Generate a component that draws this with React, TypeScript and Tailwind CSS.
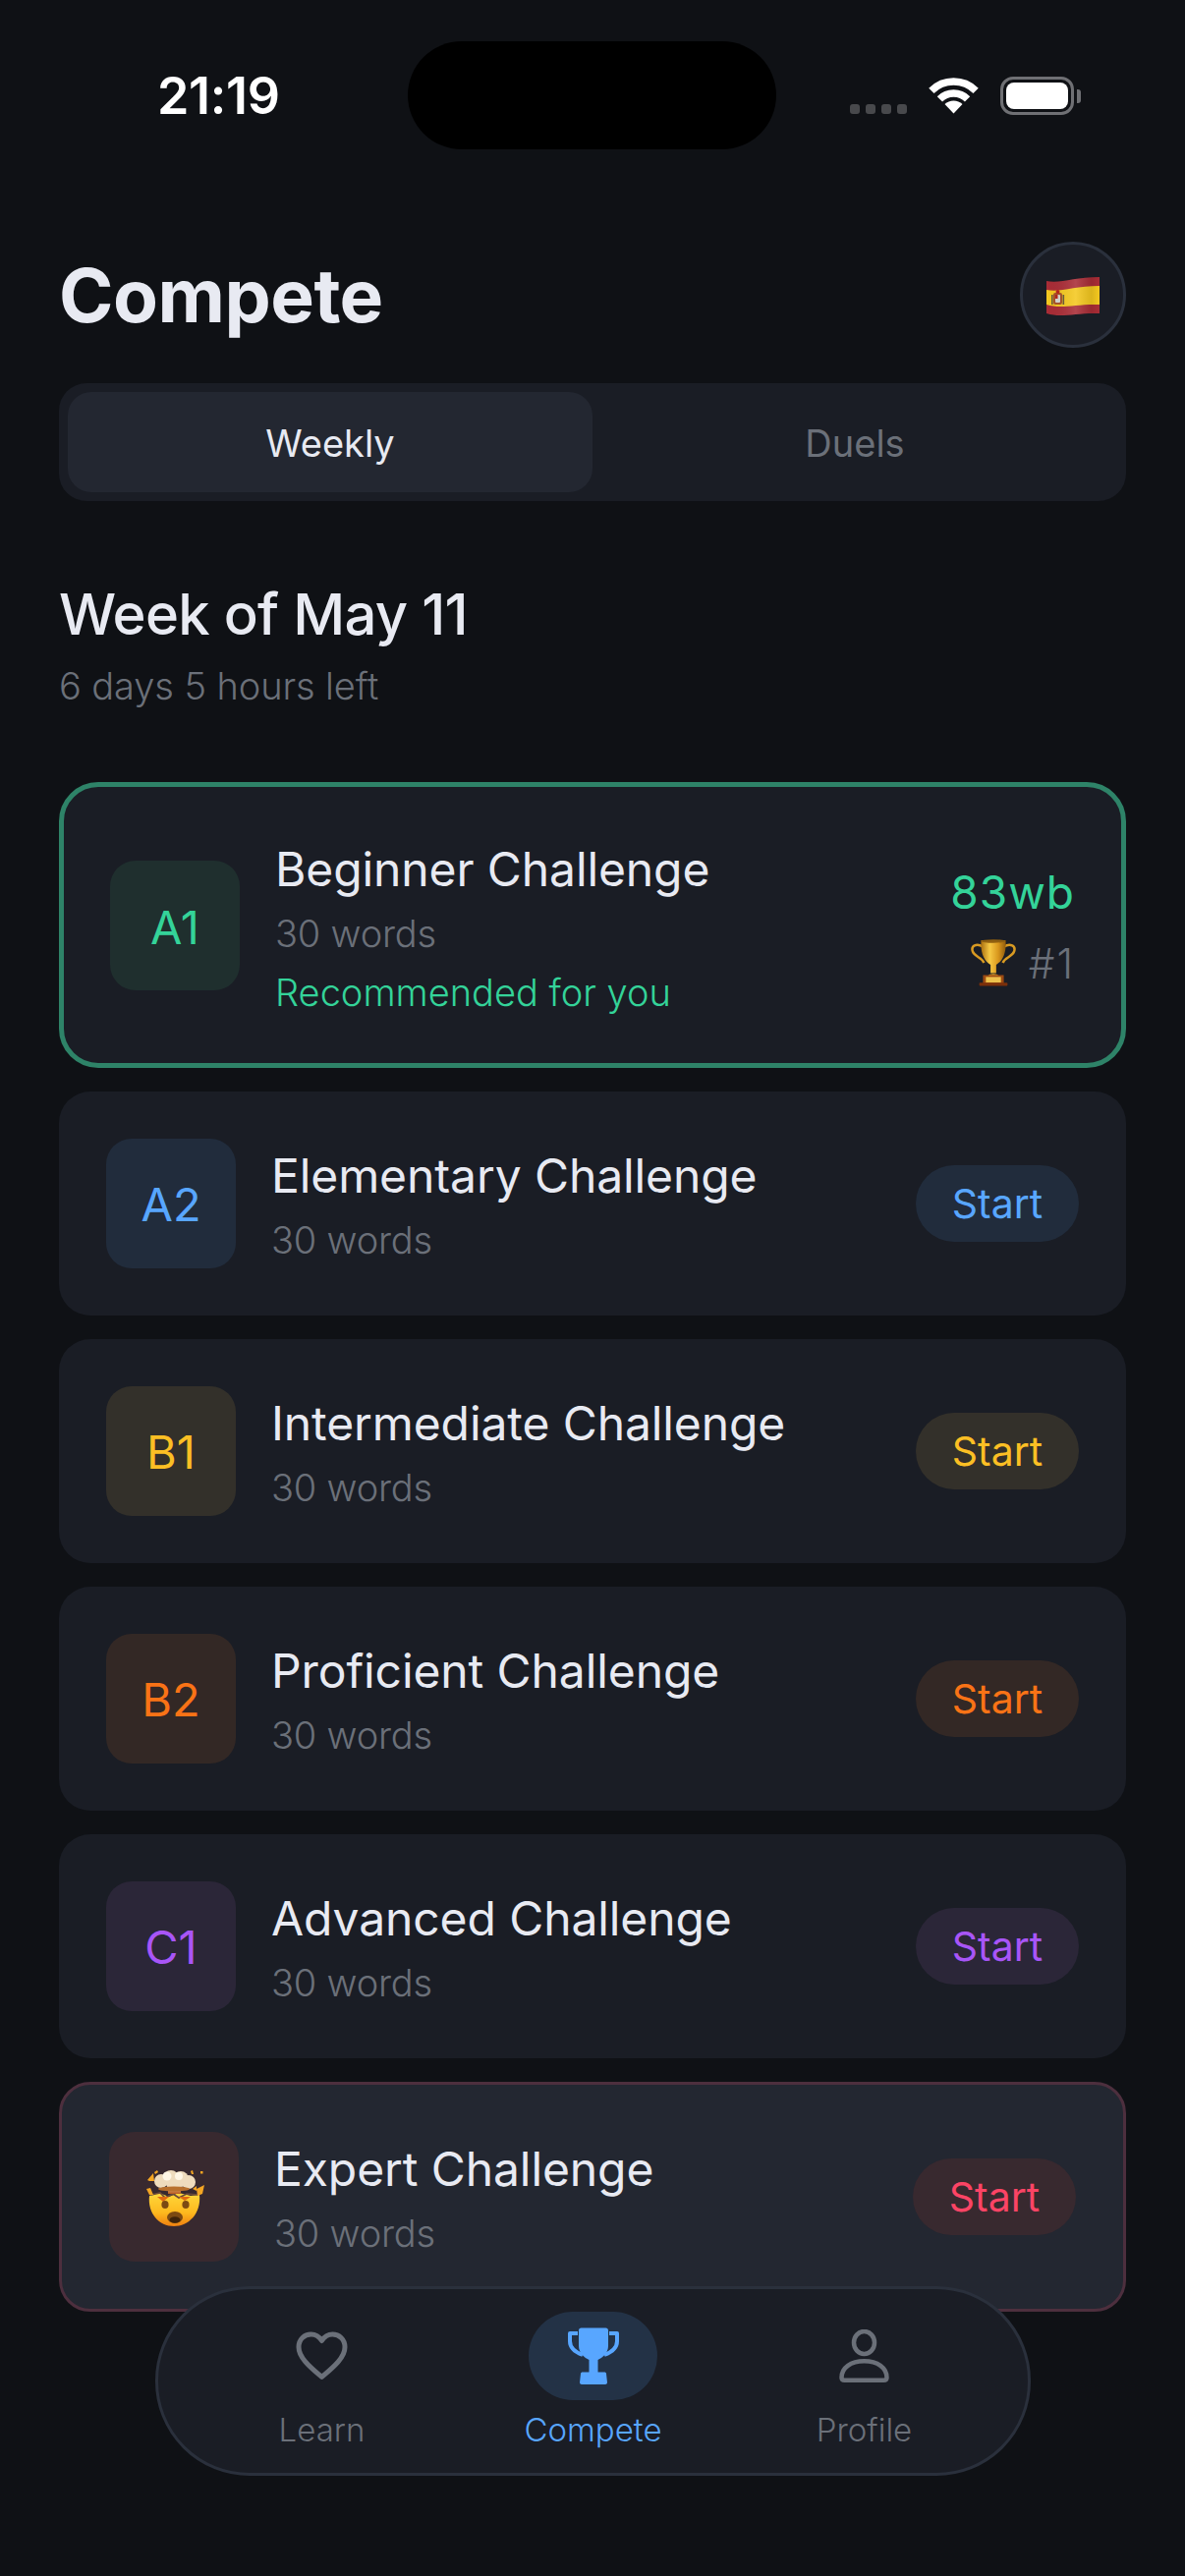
import type { ReactNode } from 'react';

function Wifi() {
  return (
    <svg width="51" height="38" viewBox="0 0 51 38" fill="none" className="block">
      <path d="M2.9 14.4a32 32 0 0 1 45.2 0" stroke="#fff" strokeWidth="7.5" />
      <path d="M11.4 22.9a20 20 0 0 1 28.2 0" stroke="#fff" strokeWidth="7.5" />
      <path d="M25.5 37.5L16.5 28a13 13 0 0 1 18 0Z" fill="#fff" />
    </svg>
  );
}

function SpainFlag() {
  return (
    <svg width="54" height="40" viewBox="0 0 54 40" className="mt-[4px] block">
      <defs>
        <linearGradient id="flagShade" x1="0" x2="1" y1="0" y2="0">
          <stop offset="0" stopColor="#000" stopOpacity="0" />
          <stop offset="0.55" stopColor="#fff" stopOpacity="0.12" />
          <stop offset="0.85" stopColor="#000" stopOpacity="0.1" />
          <stop offset="1" stopColor="#000" stopOpacity="0" />
        </linearGradient>
      </defs>
      <path d="M0 4C14 7 28 0 54 0V37C30 36 16 42 0 37Z" fill="#a92c36" />
      <path d="M0 13C14 16 28 9 54 9V28C30 27 16 33 0 28Z" fill="#f4c81f" />
      <path d="M0 4C14 7 28 0 54 0V37C30 36 16 42 0 37Z" fill="url(#flagShade)" />
      <rect x="7" y="16" width="9" height="12" rx="2" fill="#a5532a" />
      <rect x="9" y="18" width="5" height="8" rx="1" fill="#d0d0c8" />
      <rect x="9" y="18" width="2.5" height="4" fill="#b3261e" />
      <circle cx="11.5" cy="15" r="2" fill="#b3261e" />
      <rect x="5" y="18" width="1.6" height="10" fill="#6b5a3a" />
      <rect x="16.5" y="18" width="1.6" height="10" fill="#6b5a3a" />
    </svg>
  );
}

function TrophyEmoji() {
  return (
    <svg width="48" height="50" viewBox="15 15 50 52" className="block">
      <defs>
        <linearGradient id="cupGold" x1="0" x2="1" y1="0" y2="0">
          <stop offset="0" stopColor="#a96f10" />
          <stop offset="0.35" stopColor="#f6c944" />
          <stop offset="0.7" stopColor="#d8961c" />
          <stop offset="1" stopColor="#8f5a0c" />
        </linearGradient>
      </defs>
      <path d="M29 24C22 20 16 23 18 29C20 35 28 35 30 41" fill="none" stroke="#d89a22" strokeWidth="2.6" />
      <path d="M51 24C58 20 64 23 62 29C60 35 52 35 50 41" fill="none" stroke="#d89a22" strokeWidth="2.6" />
      <path d="M27 17H53C54 30 50 39 43 43V52H37V43C30 39 26 30 27 17Z" fill="url(#cupGold)" />
      <ellipse cx="40" cy="18" rx="13" ry="1.8" fill="#8f5f10" />
      <path d="M34 55C36 52 44 52 46 55Z" fill="#e0a42a" />
      <rect x="29" y="54" width="22" height="9" fill="#9c4a12" />
      <rect x="32" y="56" width="16" height="6" fill="#edc14c" />
      <rect x="25" y="62" width="30" height="3.5" rx="1" fill="#7a2f0a" />
    </svg>
  );
}

function MindBlownEmoji() {
  return (
    <svg width="90" height="85" viewBox="0 0 90 85" className="block">
      <defs>
        <linearGradient id="faceFill" x1="0" x2="0" y1="0" y2="1">
          <stop offset="0" stopColor="#ffd83b" />
          <stop offset="0.6" stopColor="#fdb81e" />
          <stop offset="1" stopColor="#ee7f10" />
        </linearGradient>
        <linearGradient id="stemFill" x1="0" x2="0" y1="0" y2="1">
          <stop offset="0" stopColor="#f3e2c3" />
          <stop offset="1" stopColor="#b9591a" />
        </linearGradient>
      </defs>
      <path d="M20 40L30 37L40 41L50 37L62 40L71 39C73 58 60 71 45 71C30 71 18 58 20 40Z" fill="url(#faceFill)" />
      <path d="M22 39L31 37L36 42L44 38L50 42L58 38L70 39" fill="none" stroke="#6b4a3a" strokeWidth="1.6" />
      <path d="M28 41L34 46L40 41M50 41L56 45L62 41" fill="#e06a12" />
      <rect x="39" y="29" width="13" height="9" fill="url(#stemFill)" />
      <g fill="#efdcbd">
        <circle cx="32" cy="25" r="7" />
        <circle cx="42" cy="22" r="8" />
        <circle cx="52" cy="23" r="8" />
        <circle cx="60" cy="26" r="7" />
        <circle cx="45" cy="27" r="8" />
      </g>
      <g fill="#fff7e6">
        <circle cx="38" cy="20" r="4.5" />
        <circle cx="50" cy="20" r="4" />
      </g>
      <ellipse cx="45" cy="33" rx="16" ry="2.6" fill="#b9712e" />
      <g fill="#f5a623">
        <path d="M18 24L24 17L25 25L20 25Z" />
        <path d="M25 16L28 14L29 16L26 18Z" />
        <path d="M17 33L21 32L24 39L20 39Z" />
        <path d="M62 15L64 14L65 18L63 18Z" />
        <rect x="72" y="15" width="2.5" height="2.5" />
        <path d="M68 33L76 29L74 38L69 40Z" />
        <path d="M64 33L68 30L68 35Z" />
      </g>
      <ellipse cx="36" cy="49" rx="3.6" ry="4" fill="#7c4a12" />
      <ellipse cx="57" cy="49" rx="3.6" ry="4" fill="#7c4a12" />
      <ellipse cx="46" cy="62" rx="8" ry="6" fill="#7c4a12" />
      <ellipse cx="46" cy="64.5" rx="5.5" ry="3.2" fill="#3e230a" />
    </svg>
  );
}

function NavHeart() {
  return (
    <svg width="53" height="50" viewBox="0 0 53 50" fill="none" className="block">
      <path
        d="M26.5 46.5C18 39 3 28 3 16C3 8 9 3 15.5 3C20 3 24 5.5 26.5 9.5C29 5.5 33 3 37.5 3C44 3 50 8 50 16C50 28 35 39 26.5 46.5Z"
        stroke="#6b7079"
        strokeWidth="5"
        strokeLinejoin="round"
      />
    </svg>
  );
}

function NavTrophy() {
  return (
    <svg width="54" height="58" viewBox="0 0 54 58" fill="none" className="block">
      <path d="M11 6H3V14C3 21 8 25 16 28" stroke="#58a6ff" strokeWidth="4" strokeLinejoin="round" />
      <path d="M43 6H51V14C51 21 46 25 38 28" stroke="#58a6ff" strokeWidth="4" strokeLinejoin="round" />
      <path d="M12 3C12 1.5 13 0.5 14.5 0.5H39.5C41 0.5 42 1.5 42 3V19C42 26 36 31 31.5 33V46H22.5V33C18 31 12 26 12 19Z" fill="#58a6ff" />
      <path d="M14 47C14 46 15 45.500 16 45.500H38C39 45.500 40 46 40 47L41 56C41 57 40 58 39 58H15C14 58 13 57 13 56Z" fill="#58a6ff" />
    </svg>
  );
}

function NavProfile() {
  return (
    <svg width="51" height="54" viewBox="0 0 51 54" fill="none" stroke="#6b7079" strokeWidth="4.5" className="block">
      <ellipse cx="25.5" cy="13.5" rx="10.5" ry="11.5" />
      <path d="M2.500 49C2.500 39 12 32.200 25.500 32.200C39 32.200 48.500 39 48.500 49C48.500 50.700 47.500 51.700 45.500 51.700H5.500C3.500 51.700 2.500 50.700 2.500 49Z" strokeLinejoin="round" />
    </svg>
  );
}

type Level = {
  code: string;
  title: string;
  badge: string;
  text: string;
};

const levels: Level[] = [
  { code: 'A2', title: 'Elementary Challenge', badge: 'bg-[#212c3c]', text: 'text-[#58a6ff]' },
  { code: 'B1', title: 'Intermediate Challenge', badge: 'bg-[#33302a]', text: 'text-[#fbbf24]' },
  { code: 'B2', title: 'Proficient Challenge', badge: 'bg-[#332825]', text: 'text-[#f97316]' },
  { code: 'C1', title: 'Advanced Challenge', badge: 'bg-[#2b2638]', text: 'text-[#a855f7]' },
];

function Badge({ className, children }: { className: string; children: ReactNode }) {
  return (
    <div className={`flex h-[132px] w-[132px] shrink-0 items-center justify-center rounded-[26px] pt-[2px] text-[47px] font-normal ${className}`}>
      {children}
    </div>
  );
}

function Title({ children }: { children: ReactNode }) {
  return <div className="h-[60px] pt-[6px] text-[48px] leading-[60px] tracking-[-0.1px] text-[#e8eaf2]">{children}</div>;
}

function Words() {
  return <div className="mt-[14px] h-[54px] text-[38px] font-light leading-[54px] tracking-[-0.2px] text-[#6b7079]">30 words</div>;
}

function StartButton({ className }: { className: string }) {
  return (
    <div className={`flex h-[78px] w-[166px] shrink-0 items-center justify-center rounded-[39px] pt-[2px] text-[41px] ${className}`}>
      Start
    </div>
  );
}

function NavItem({ label, active, children }: { label: string; active?: boolean; children: ReactNode }) {
  return (
    <div className="flex w-[276px] flex-col items-center">
      <div className={`flex h-[90px] w-[131px] items-center justify-center rounded-[45px] ${active ? 'bg-[#233246]' : ''}`}>
        {children}
      </div>
      <div className={`mt-[9px] text-[33px] font-light leading-[42px] ${active ? 'text-[#58a6ff]' : 'text-[#6b7079]'}`}>
        {label}
      </div>
    </div>
  );
}

export default function App() {
  return (
    <div className="relative h-[2622px] w-[1206px] overflow-hidden bg-[#0f1115] font-['Inter',sans-serif]">
      {/* Dynamic island */}
      <div className="absolute left-[415px] top-[42px] h-[110px] w-[375px] rounded-[55px] bg-black" />

      {/* Status bar */}
      <div className="flex h-[246px] items-start justify-between pl-[160px] pr-[106px] pt-[73px]">
        <div className="text-[52px] font-semibold leading-[50px] tracking-[-0.3px] text-white">21:19</div>
        <div className="flex items-start pt-[5px]">
          <div className="mr-[22px] mt-[28px] flex gap-[6px]">
            <div className="h-[10px] w-[10px] rounded-[3px] bg-[#48494c]" />
            <div className="h-[10px] w-[10px] rounded-[3px] bg-[#48494c]" />
            <div className="h-[10px] w-[10px] rounded-[3px] bg-[#48494c]" />
            <div className="h-[10px] w-[10px] rounded-[3px] bg-[#48494c]" />
          </div>
          <Wifi />
          <div className="ml-[22px] flex items-center">
            <div className="flex h-[39px] w-[75px] items-center justify-center rounded-[13px] border-[3px] border-[#6f7074]">
              <div className="h-[27px] w-[63px] rounded-[8px] bg-white" />
            </div>
            <div className="ml-[3px] h-[14px] w-[4px] rounded-r-[3px] bg-[#6f7074]" />
          </div>
        </div>
      </div>

      <div className="px-[60px]">
        {/* Header */}
        <div className="flex h-[108px] items-center justify-between">
          <div className="mt-[2px] text-[75px] font-bold leading-[80px] tracking-[-0.5px] text-[#e8eaf2]">Compete</div>
          <div className="flex h-[108px] w-[108px] items-center justify-center rounded-full border-[3px] border-[#2a303c] bg-[#1a1d25]">
            <SpainFlag />
          </div>
        </div>

        {/* Tabs */}
        <div className="mt-[36px] flex h-[120px] rounded-[28px] bg-[#1a1d25] p-[9px]">
          <div className="flex flex-1 items-center justify-center rounded-[24px] bg-[#232731] pt-[2px] text-[38px] text-[#e8eaf2]">Weekly</div>
          <div className="flex flex-1 items-center justify-center pt-[2px] text-[38px] text-[#6b7079]">Duels</div>
        </div>

        {/* Week */}
        <div className="mt-[79px] text-[58px] font-medium leading-[72px] tracking-[-0.7px] text-[#e8eaf2]">Week of May 11</div>
        <div className="mt-[12px] text-[38px] font-light leading-[50px] tracking-[-0.1px] text-[#6b7079]">6 days 5 hours left</div>

        {/* Challenges */}
        <div className="mt-[73px] flex flex-col gap-[24px]">
          <div className="flex items-center rounded-[40px] border-[5px] border-[#2e8368] bg-[#1a1d25] px-[47px] py-[48px]">
            <Badge className="bg-[#1f2f2e] pt-[5px] text-[#34d399]">A1</Badge>
            <div className="ml-[36px] min-w-0 flex-1">
              <Title>Beginner Challenge</Title>
              <Words />
              <div className="mt-[6px] h-[51px] text-[38px] font-light leading-[54px] text-[#34d399]">Recommended for you</div>
            </div>
            <div className="flex flex-col items-end pt-[6px]">
              <div className="text-[46px] leading-[60px] tracking-[1px] text-[#34d399]">83wb</div>
              <div className="mt-[11px] flex items-center gap-[12px]">
                <TrophyEmoji />
                <div className="text-[42px] font-light tracking-[2px] text-[#6b7079]">#1</div>
              </div>
            </div>
          </div>

          {levels.map((level) => (
            <div key={level.code} className="flex items-center rounded-[32px] bg-[#1a1d25] p-[48px]">
              <Badge className={`${level.badge} ${level.text}`}>{level.code}</Badge>
              <div className="ml-[36px] min-w-0 flex-1">
                <Title>{level.title}</Title>
                <Words />
              </div>
              <StartButton className={`${level.badge} ${level.text}`} />
            </div>
          ))}

          <div className="flex items-center rounded-[32px] border-[3px] border-[#4d2f3e] bg-[#232731] p-[48px]">
            <Badge className="bg-[#38292f]">
              <MindBlownEmoji />
            </Badge>
            <div className="ml-[36px] min-w-0 flex-1">
              <Title>Expert Challenge</Title>
              <Words />
            </div>
            <StartButton className="bg-[#38292f] text-[#fb4465]" />
          </div>
        </div>
      </div>

      {/* Bottom nav floats over the list */}
      <div className="absolute left-[158px] top-[2327px] flex h-[193px] w-[891px] items-start justify-center rounded-[96px] border-[3px] border-[#2a303c] bg-[#1a1d25] pt-[23px]">
        <NavItem label="Learn">
          <NavHeart />
        </NavItem>
        <NavItem label="Compete" active>
          <NavTrophy />
        </NavItem>
        <NavItem label="Profile">
          <NavProfile />
        </NavItem>
      </div>
    </div>
  );
}
